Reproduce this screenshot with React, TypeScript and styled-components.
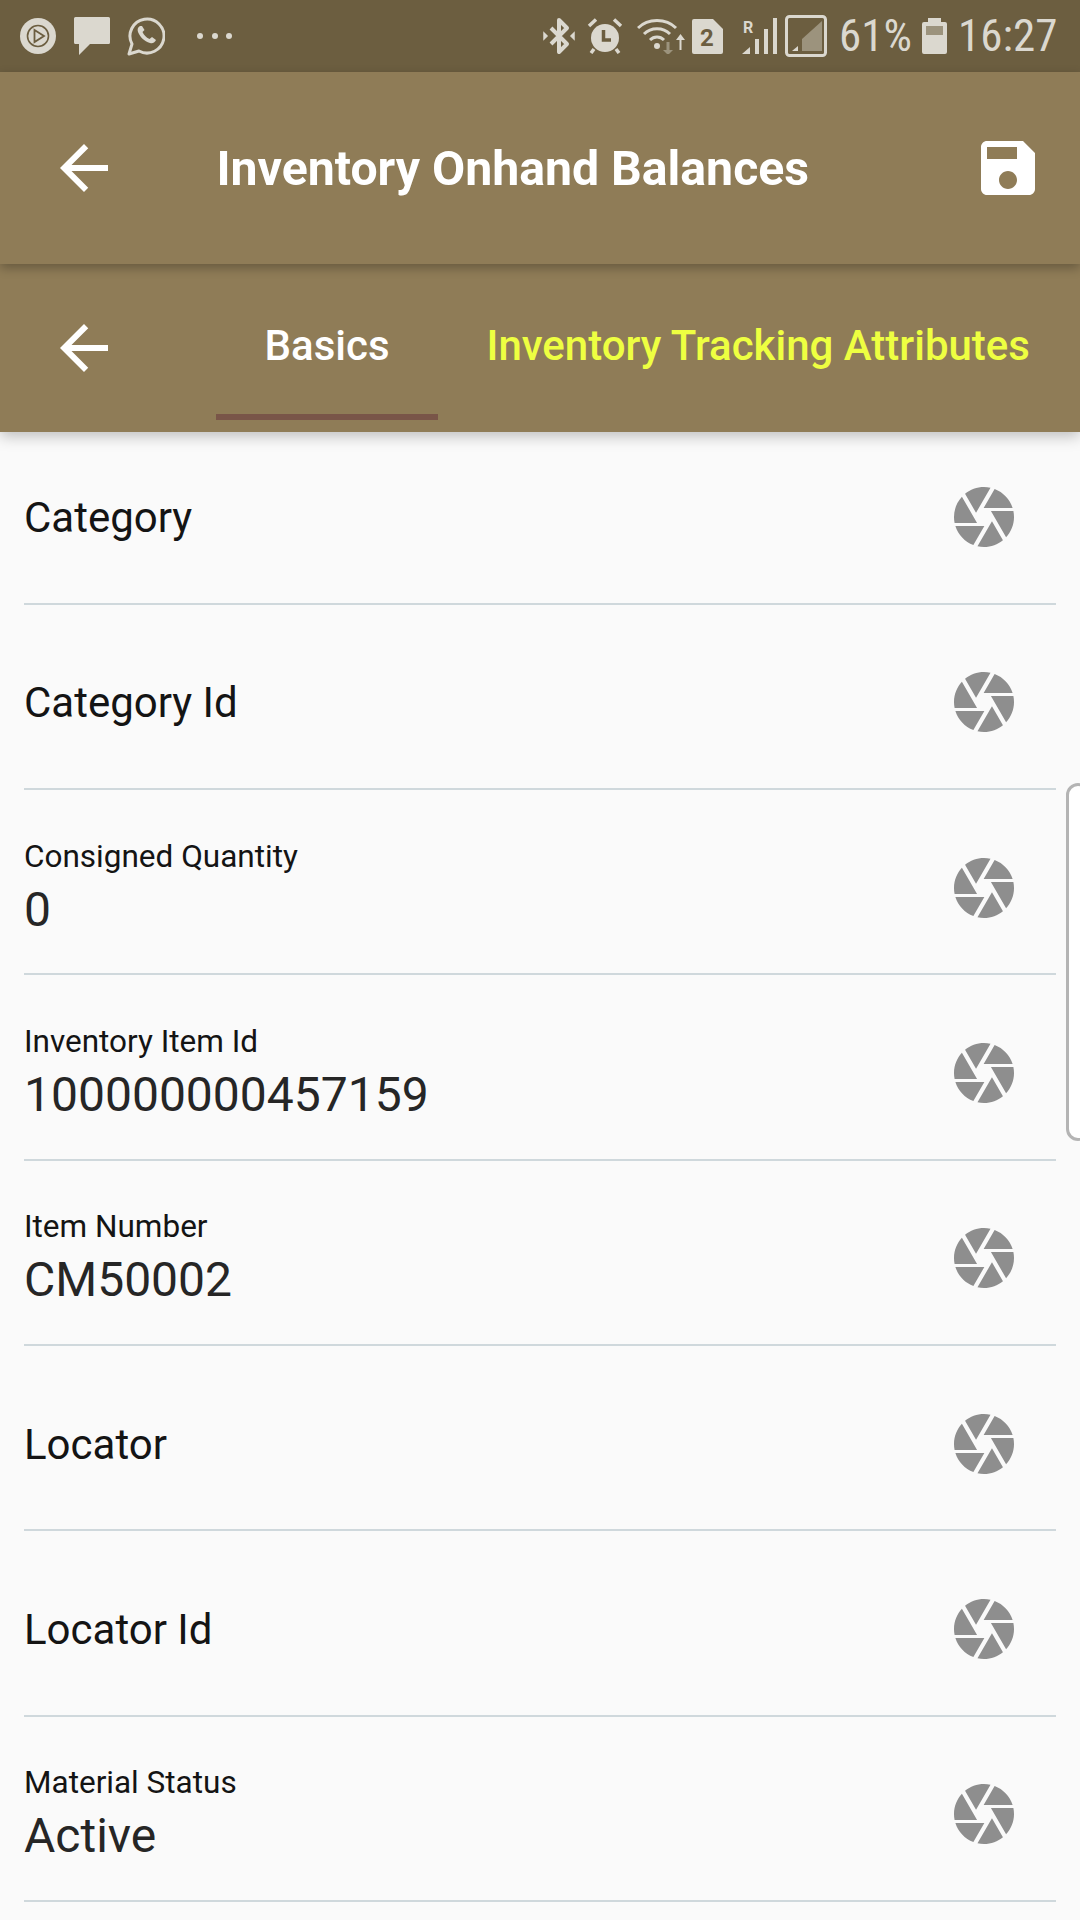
import React from 'react';
import styled, { createGlobalStyle } from 'styled-components';

const GlobalStyle = createGlobalStyle`
  html, body {
    margin: 0;
    padding: 0;
    background: #fafafa;
    font-family: Roboto, "Liberation Sans", sans-serif;
  }
  * {
    box-sizing: border-box;
  }
`;

const STATUS_INK = '#dbd8cf';
const STATUS_BG = '#6c5e40';
const STATUS_DIM = '#9c937d';

const Page = styled.div`
  position: relative;
  width: 1080px;
  height: 1920px;
  overflow: hidden;
  background: #fafafa;
`;

const StatusBar = styled.div`
  height: 72px;
  background: ${STATUS_BG};
  display: flex;
  align-items: center;
  justify-content: space-between;
  padding: 0 25px 0 20px;
`;

const StatusGroup = styled.div`
  display: flex;
  align-items: center;
`;

const StatusIcon = styled.svg<{ $gap?: number }>`
  display: block;
  flex: none;
  margin-left: ${({ $gap }) => $gap ?? 0}px;
`;

const StatusText = styled.span<{ $gap: number; $width: number }>`
  display: block;
  width: ${({ $width }) => $width}px;
  margin-left: ${({ $gap }) => $gap}px;
  color: ${STATUS_INK};
  font-size: 45px;
  line-height: 72px;
  font-stretch: 75%;
  white-space: nowrap;
`;

const Toolbar = styled.header`
  position: relative;
  z-index: 2;
  height: 192px;
  background: #8f7c57;
  box-shadow: 0 4px 10px rgba(0, 0, 0, 0.28);
  display: flex;
  align-items: center;
  padding: 0 36px 0 48px;
`;

const Title = styled.h1`
  flex: 1;
  margin: 0 0 0 96.5px;
  color: #fff;
  font-size: 48.2px;
  font-weight: 700;
  white-space: nowrap;
`;

const TabBar = styled.nav`
  position: relative;
  z-index: 1;
  height: 168px;
  background: #8f7c57;
  box-shadow: 0 4px 14px rgba(0, 0, 0, 0.25);
  display: flex;
  align-items: stretch;
  padding-left: 48px;
`;

const TabBack = styled.div`
  display: flex;
  align-items: center;
  width: 168px;
  flex: none;
`;

const Tab = styled.div<{ $active?: boolean }>`
  height: 156px;
  padding: 12px 48.5px 0;
  display: flex;
  align-items: center;
  white-space: nowrap;
  font-size: 42px;
  font-weight: 500;
  color: ${({ $active }) => ($active ? '#fff' : '#eeff41')};
  border-bottom: 6px solid ${({ $active }) => ($active ? '#795548' : 'transparent')};
`;

const MaterialIcon = styled.svg`
  display: block;
  flex: none;
  width: 72px;
  height: 72px;
  fill: #fff;
`;

const List = styled.main`
  margin-top: -12.5px;
`;

const Row = styled.div`
  height: 185.33px;
  margin: 0 24px;
  padding: 12px 36px 0 0;
  border-bottom: 2px solid #cfd8dc;
  display: flex;
  align-items: center;
  justify-content: space-between;
`;

const Field = styled.div`
  display: flex;
  flex-direction: column;
`;

const FieldLabel = styled.span<{ $small: boolean }>`
  color: #141414;
  font-size: ${({ $small }) => ($small ? 31.5 : 42)}px;
  line-height: ${({ $small }) => ($small ? 44 : 56)}px;
  padding-top: ${({ $small }) => ($small ? 0 : 2)}px;
`;

const FieldValue = styled.span`
  color: #262626;
  font-size: 48px;
  line-height: 62px;
`;

const RowIcon = styled.svg`
  display: block;
  flex: none;
  width: 72px;
  height: 72px;
  fill: #8e8e8e;
`;

const EdgeHandle = styled.div`
  position: absolute;
  top: 783px;
  right: -10px;
  width: 24px;
  height: 358px;
  background: #fff;
  border: 3px solid #b4b4b4;
  border-radius: 16px;
`;

const ARROW = 'M20 11H7.83l5.59-5.59L12 4l-8 8 8 8 1.41-1.41L7.83 13H20v-2z';
const SAVE =
  'M17 3H5c-1.11 0-2 .9-2 2v14c0 1.1.89 2 2 2h14c1.1 0 2-.9 2-2V7l-4-4zm-5 16c-1.66 0-3-1.34-3-3s1.34-3 3-3 3 1.34 3 3-1.34 3-3 3zm3-10H5V5h10v4z';
const APERTURE =
  'M9.4 10.5l4.77-8.26C13.47 2.09 12.75 2 12 2c-2.4 0-4.6.85-6.32 2.25l3.66 6.35.06-.1zM21.54 9c-.92-2.92-3.15-5.26-6-6.34L11.88 9h9.66zm.26 1h-7.49l.29.5 4.76 8.25C21 16.97 22 14.61 22 12c0-.69-.07-1.35-.2-2zM8.54 12l-3.9-6.75C3.01 7.03 2 9.39 2 12c0 .69.07 1.35.2 2h7.49l-1.15-2zm-6.08 3c.92 2.92 3.15 5.26 6 6.34L12.12 15H2.46zm11.27 0l-3.9 6.76c.7.15 1.42.24 2.17.24 2.4 0 4.6-.85 6.32-2.25l-3.66-6.35-.93 1.6z';

const rows: { label: string; value?: string }[] = [
  { label: 'Category' },
  { label: 'Category Id' },
  { label: 'Consigned Quantity', value: '0' },
  { label: 'Inventory Item Id', value: '100000000457159' },
  { label: 'Item Number', value: 'CM50002' },
  { label: 'Locator' },
  { label: 'Locator Id' },
  { label: 'Material Status', value: 'Active' },
];

const App: React.FC = () => {
  return (
    <Page>
      <GlobalStyle />
      <StatusBar>
        <StatusGroup>
          <StatusIcon width={36} height={36} viewBox="0 0 36 36">
            <circle cx="18" cy="18" r="18" fill={STATUS_INK} />
            <circle cx="18" cy="18" r="10.5" fill="none" stroke={STATUS_BG} strokeWidth="1.6" />
            <path d="M14.5 12 L24 18 L14.5 24 Z" fill="none" stroke={STATUS_BG} strokeWidth="1.8" />
          </StatusIcon>
          <StatusIcon $gap={18} width={36} height={38} viewBox="0 0 36 38">
            <path
              d="M1.5 0H34.5A1.5 1.5 0 0 1 36 1.500V25.500A1.500 1.500 0 0 1 34.500 27H16L5 38V27H1.500A1.500 1.500 0 0 1 0 25.500V1.500A1.500 1.500 0 0 1 1.500 0Z"
              fill={STATUS_INK}
            />
          </StatusIcon>
          <StatusIcon $gap={17} width={38} height={40} viewBox="0 0 38 40">
            <path
              d="M2 38 L5 28 A17 17 0 1 1 12 35 Z"
              fill="none"
              stroke={STATUS_INK}
              strokeWidth="3"
              strokeLinejoin="round"
            />
            <path
              d="M13 10 C11 11 10 13 11 16 C13 21 17 25 23 27 C26 28 28 26 29 24 L25 21 L22.500 23 C19 21.500 17 19 15.500 16 L17.500 14 L15 10 Z"
              fill={STATUS_INK}
            />
          </StatusIcon>
          <StatusIcon $gap={31} width={36} height={8} viewBox="0 0 36 8">
            <circle cx="4" cy="4" r="3" fill={STATUS_INK} />
            <circle cx="19" cy="4" r="3" fill={STATUS_INK} />
            <circle cx="33" cy="4" r="3" fill={STATUS_INK} />
          </StatusIcon>
        </StatusGroup>
        <StatusGroup>
          <StatusIcon width={32} height={38} viewBox="0 0 32 38">
            <path
              d="M8 11 L24 27 L16 35 V3 L24 11 L8 27"
              fill="none"
              stroke={STATUS_INK}
              strokeWidth="4"
              strokeLinejoin="round"
            />
            <path d="M1 16 L4 19 L1 22 Z M31 16 L28 19 L31 22 Z" fill={STATUS_INK} stroke={STATUS_INK} strokeWidth="1.500" />
          </StatusIcon>
          <StatusIcon $gap={12} width={36} height={36} viewBox="0 0 36 36">
            <circle cx="18" cy="20" r="14" fill={STATUS_INK} />
            <path d="M16.500 12V22H24" fill="none" stroke={STATUS_BG} strokeWidth="3.500" />
            <path d="M2 8 L9 1.500 M34 8 L27 1.500 M7 31 L4 35 M29 31 L32 35" stroke={STATUS_INK} strokeWidth="3.500" />
          </StatusIcon>
          <StatusIcon $gap={14} width={48} height={36} viewBox="0 0 48 36">
            <path
              d="M1 10 C11 0 29 0 39 10 M7 16 C14 9 26 9 33 16 M13 22 C17 18 23 18 27 22"
              fill="none"
              stroke={STATUS_INK}
              strokeWidth="3"
            />
            <circle cx="20" cy="28" r="3" fill={STATUS_INK} />
            <path d="M29.500 24V32H26L31 37L36 32H32.500V24Z" fill={STATUS_DIM} />
            <path d="M42.500 32V22H39L43.500 16L48 22H44.500V32Z" fill={STATUS_INK} />
          </StatusIcon>
          <StatusIcon $gap={7} width={31} height={35} viewBox="0 0 31 35">
            <path d="M2 0H21L31 10V33A2 2 0 0 1 29 35H2A2 2 0 0 1 0 33V2A2 2 0 0 1 2 0Z" fill={STATUS_INK} />
            <text x="15" y="27" textAnchor="middle" fontFamily="Roboto, sans-serif" fontSize="24" fontWeight="700" fill={STATUS_BG}>
              2
            </text>
          </StatusIcon>
          <StatusIcon $gap={19} width={36} height={36} viewBox="0 0 36 36">
            <text x="1" y="15" fontFamily="Roboto, sans-serif" fontSize="16" fontWeight="700" fill={STATUS_INK}>
              R
            </text>
            <path d="M0 36 L8 29 V36 Z" fill={STATUS_INK} />
            <rect x="13" y="21" width="4" height="15" fill={STATUS_INK} />
            <rect x="22" y="11" width="4" height="25" fill={STATUS_INK} />
            <rect x="31" y="0" width="4" height="36" fill={STATUS_INK} />
          </StatusIcon>
          <StatusIcon $gap={7} width={42} height={42} viewBox="0 0 42 42">
            <rect x="1.500" y="1.500" width="39" height="39" rx="3" fill="none" stroke={STATUS_INK} strokeWidth="3" />
            <path d="M7 36 L13 31 V36 Z" fill={STATUS_INK} />
            <path d="M17 24 L37 6 V36 H17 Z" fill={STATUS_DIM} />
          </StatusIcon>
          <StatusText $gap={12} $width={71}>
            61%
          </StatusText>
          <StatusIcon $gap={12} width={25} height={36} viewBox="0 0 25 36">
            <path d="M6 0H19V4H23A2 2 0 0 1 25 6V34A2 2 0 0 1 23 36H2A2 2 0 0 1 0 34V6A2 2 0 0 1 2 4H6Z" fill={STATUS_INK} />
            <rect x="4" y="8" width="17" height="9" fill={STATUS_DIM} />
          </StatusIcon>
          <StatusText $gap={11} $width={97}>
            16:27
          </StatusText>
        </StatusGroup>
      </StatusBar>

      <Toolbar>
        <MaterialIcon viewBox="0 0 24 24">
          <path d={ARROW} />
        </MaterialIcon>
        <Title>Inventory Onhand Balances</Title>
        <MaterialIcon viewBox="0 0 24 24">
          <path d={SAVE} />
        </MaterialIcon>
      </Toolbar>

      <TabBar>
        <TabBack>
          <MaterialIcon viewBox="0 0 24 24">
            <path d={ARROW} />
          </MaterialIcon>
        </TabBack>
        <Tab $active>Basics</Tab>
        <Tab>Inventory Tracking Attributes</Tab>
      </TabBar>

      <List>
        {rows.map((row) => (
          <Row key={row.label}>
            <Field>
              <FieldLabel $small={row.value !== undefined}>{row.label}</FieldLabel>
              {row.value !== undefined && <FieldValue>{row.value}</FieldValue>}
            </Field>
            <RowIcon viewBox="0 0 24 24">
              <path d={APERTURE} />
            </RowIcon>
          </Row>
        ))}
      </List>

      <EdgeHandle />
    </Page>
  );
};

export default App;
